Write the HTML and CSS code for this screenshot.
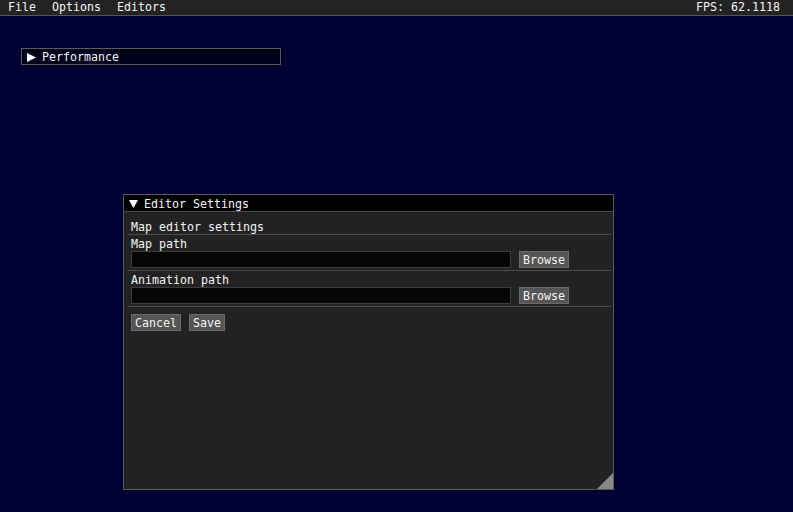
FILE: index.html
```html
<!DOCTYPE html>
<html>
<head>
<meta charset="utf-8">
<link rel="stylesheet" href="styles.css">
</head>
<body>
<div class="menubar">
  <span class="menu-item">File</span>
  <span class="menu-item">Options</span>
  <span class="menu-item">Editors</span>
  <span class="fps">FPS: 62.1118</span>
</div>

<div class="window perf">
  <div class="titlebar collapsed">
    <svg class="arrow" width="9" height="9" viewBox="0 0 9 9"><polygon points="0,0 9,4.5 0,9" fill="#ffffff"/></svg>
    <span>Performance</span>
  </div>
</div>

<div class="window editor">
  <div class="titlebar active">
    <svg class="arrow" width="9" height="8" viewBox="0 0 9 8"><polygon points="0,0 9,0 4.5,8" fill="#ffffff"/></svg>
    <span>Editor Settings</span>
  </div>
  <div class="content">
    <div class="text">Map editor settings</div>
    <div class="sep"></div>
    <div class="text label">Map path</div>
    <div class="row">
      <div class="input"></div>
      <button class="btn">Browse</button>
    </div>
    <div class="sep"></div>
    <div class="text label">Animation path</div>
    <div class="row">
      <div class="input"></div>
      <button class="btn">Browse</button>
    </div>
    <div class="sep"></div>
    <div class="row actions">
      <button class="btn">Cancel</button>
      <button class="btn">Save</button>
    </div>
  </div>
  <div class="grip"></div>
</div>
</body>
</html>
```

FILE: styles.css
```css
* { box-sizing: border-box; }
html, body {
  margin: 0;
  padding: 0;
}
body {
  width: 793px;
  height: 512px;
  background: #000033;
  color: #f4f4f4;
  font-family: "DejaVu Sans Mono", "Liberation Mono", monospace;
  font-size: 11.63px;
  position: relative;
  overflow: hidden;
}
.menubar {
  display: flex;
  align-items: center;
  height: 16px;
  line-height: 15px;
  background: #232323;
  border-bottom: 1px solid #555555;
  padding-left: 8px;
  padding-right: 13px;
  white-space: pre;
}
.menu-item { margin-right: 16px; }
.fps { margin-left: auto; }

.window {
  position: absolute;
  border: 1px solid #5a5a5a;
}
.perf {
  left: 21px;
  top: 48px;
  width: 260px;
  height: 17px;
  background: #00001a;
}
.editor {
  left: 123px;
  top: 194px;
  width: 491px;
  height: 296px;
  background: #222222;
}
.titlebar {
  display: flex;
  align-items: center;
  white-space: pre;
  padding-left: 5px;
}
.titlebar span { position: relative; top: 1px; }
.titlebar .arrow { margin-right: 6px; flex: none; position: relative; top: 1px; }
.titlebar.collapsed {
  height: 15px;
  line-height: 15px;
}
.titlebar.active {
  height: 17px;
  line-height: 16px;
  background: #000000;
  border-bottom: 1px solid #4a4a4a;
}
.content {
  padding: 8px 0 0 7px;
  display: flex;
  flex-direction: column;
  align-items: flex-start;
}
.text {
  line-height: 13px;
  height: 13px;
  padding-top: 1px;
  white-space: pre;
}
.sep {
  align-self: stretch;
  height: 1px;
  background: #4d4d4d;
  margin: 1px 2px 0 -4px;
}
.label { margin-top: 2px; }
.row {
  display: flex;
  gap: 8px;
  margin-top: 1px;
  margin-bottom: 2px;
}
.input {
  width: 380px;
  height: 17px;
  background: #050505;
  border: 1px solid #3c3c3c;
}
.btn {
  font: inherit;
  color: #f4f4f4;
  height: 17px;
  line-height: 15px;
  padding: 1px 3px 0;
  background: #555555;
  border: 1px solid #6a6a6a;
  border-radius: 0;
  white-space: pre;
}
.row + .sep { margin-top: 0; }
.actions { margin-top: 7px; }
.grip {
  position: absolute;
  right: 0;
  bottom: 0;
  width: 16px;
  height: 16px;
  background: #888888;
  clip-path: polygon(100% 0, 100% 100%, 0 100%);
}
```
